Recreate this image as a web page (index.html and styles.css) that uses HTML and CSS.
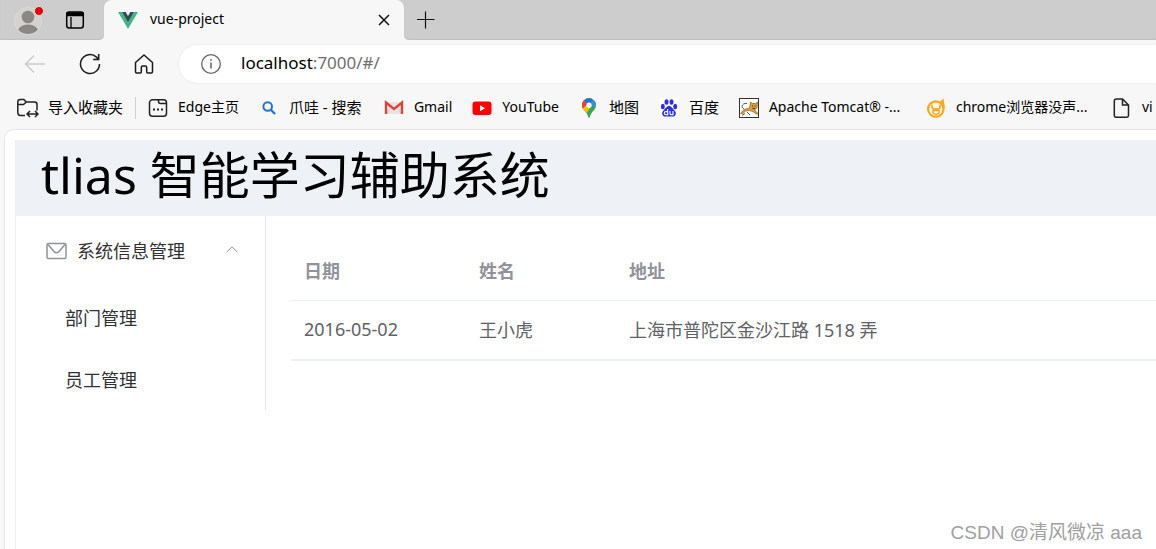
FILE: index.html
```html
<!DOCTYPE html>
<html lang="zh-CN">
<head>
<meta charset="utf-8">
<title>vue-project</title>
<link rel="stylesheet" href="styles.css">
</head>
<body>
<div class="tabstrip">
  <div class="strip-left">
    <button class="icon-btn" aria-label="个人资料">
      <svg width="30" height="30" viewBox="0 0 30 30"><defs><clipPath id="face"><circle cx="14" cy="16" r="13"/></clipPath></defs><circle cx="14" cy="16" r="13.5" fill="#d4d2cf" stroke="#dddbd8"/><g clip-path="url(#face)" fill="#8a8784"><circle cx="14" cy="12" r="6.3"/><ellipse cx="14" cy="27" rx="10.500" ry="7.500"/></g><circle cx="25" cy="6" r="4.500" fill="#e60000" stroke="#ddd"/></svg>
    </button>
    <button class="icon-btn" aria-label="标签页操作">
      <svg width="20" height="20" viewBox="0 0 20 20" fill="none" stroke="#000" stroke-width="1.500"><rect x="1.700" y="2" width="16.600" height="16" rx="2.500"/><path d="M2 3h16v2.500H2z" fill="#000"/><path d="M6 7v11" stroke-width="1.300"/></svg>
    </button>
  </div>
  <div class="tab-slot">
    <div class="tab">
      <svg width="20" height="20" viewBox="0 0 20 20"><path d="M0 2h4l6 10.400L16 2h4L10 19z" fill="#41b883"/><path d="M4 2h3.700L10 6l2.300-4H16l-6 10.400z" fill="#35495e"/></svg>
      <span class="tab-title">vue-project</span>
      <button class="icon-btn" aria-label="关闭标签页"><svg width="12" height="12" viewBox="0 0 12 12"><path d="M1 1l10 10M11 1L1 11" stroke="#111" stroke-width="1.500"/></svg></button>
    </div>
  </div>
  <div class="strip-right">
    <button class="icon-btn" aria-label="新建标签页"><svg width="18" height="18" viewBox="0 0 18 18"><path d="M8.500 .5v17M0 8.500h17.500" stroke="#111" stroke-width="1.200"/></svg></button>
  </div>
</div>
<div class="toolbar">
  <button class="icon-btn" aria-label="后退"><svg width="22" height="20" viewBox="0 0 22 20" fill="none" stroke="#cbcbcb" stroke-width="1.400"><path d="M21 10H1.500M10 1.500L1.500 10l8.500 8.500"/></svg></button>
  <button class="icon-btn" aria-label="刷新"><svg width="22" height="22" viewBox="0 0 22 22" fill="none" stroke="#1b1b1b" stroke-width="1.500"><path d="M20.500 11a9.500 9.500 0 1 1-3-6.900l2 2M19.700 1v5.500h-5.500"/></svg></button>
  <button class="icon-btn" aria-label="主页"><svg width="20" height="22" viewBox="0 0 20 22" fill="none" stroke="#1b1b1b" stroke-width="1.500" stroke-linejoin="round"><path d="M1.500 9.500L10 2l8.500 7.500v9.300q0 1.200-1.200 1.200h-3.600q-1 0-1-1v-4.500q0-1.500-1.500-1.500H8.800q-1.500 0-1.500 1.500V19q0 1-1 1H2.700q-1.200 0-1.200-1.200z"/></svg></button>
  <div class="address">
    <svg width="20" height="20" viewBox="0 0 20 20" fill="none" stroke="#666" stroke-width="1.300"><circle cx="10" cy="10" r="9.300"/><path d="M10 8.500v6M10 5v1.700" stroke-width="1.500"/></svg>
    <span class="url">localhost<span class="url-rest">:7000/#/</span></span>
  </div>
</div>
<nav class="bookmarks">
  <a class="bookmark import" href="#"><svg width="22" height="20" viewBox="0 0 22 20" fill="none" stroke="#222" stroke-width="1.500"><path d="M8 17.500H3.500Q.8 17.500.8 14.700V4Q.8 1.500 3.300 1.500h3.500L9.300 4h8.200Q20 4 20 6.500v6M1 6.500h5.500L9.300 4M10 16h11M13 13l-3 3 3 3M18 13l3 3-3 3"/></svg><span>导入收藏夹</span></a>
  <a class="bookmark latin" href="#"><svg width="20" height="20" viewBox="0 0 20 20" fill="none" stroke="#222" stroke-width="1.500"><rect x="1.500" y="1.800" width="17" height="16.500" rx="3"/><path d="M10.500 2v1.500Q10.500 5.500 12.500 5.500h6"/><path d="M5 11.500h2M9 11.500h2M13 11.500h2" stroke-width="2"/></svg><span>Edge主页</span></a>
  <a class="bookmark search" href="#"><svg width="20" height="20" viewBox="0 0 20 20" fill="none" stroke="#1976d2" stroke-width="2"><circle cx="8.700" cy="8.500" r="4.300"/><path d="M12 12l4 4" stroke-width="2.300"/></svg><span>爪哇 - 搜索</span></a>
  <a class="bookmark latin" href="#"><svg width="20" height="20" viewBox="0 0 20 20"><path d="M2 4h16v12H2z" fill="#e5e5e5"/><path d="M2 16l5.500-6M18 16l-5.500-6" stroke="#ccc"/><path d="M2 16V4.500l8 6.500 8-6.500V16" fill="none" stroke="#dc4437" stroke-width="2.400"/></svg><span>Gmail</span></a>
  <a class="bookmark latin" href="#"><svg width="20" height="20" viewBox="0 0 20 20"><rect x=".5" y="3.500" width="19" height="13.500" rx="3" fill="#f00"/><path d="M8 7.200l5 3-5 3z" fill="#fff"/></svg><span>YouTube</span></a>
  <a class="bookmark" href="#"><svg width="20" height="20" viewBox="0 0 20 20"><defs><clipPath id="pin"><path d="M10 20c-.8 0-.9-2.500-2.300-4.600C6 12.700 3 11 3 7.200a7 7 0 0 1 14 0c0 3.800-3 5.500-4.700 8.200C10.900 17.500 10.800 20 10 20z"/></clipPath></defs><g clip-path="url(#pin)"><path d="M0 0h20v20H0z" fill="#34a853"/><path d="M0 15L14 0H0z" fill="#ea4335"/><path d="M4 3l6 4 5-7H6z" fill="#1a73e8"/><path d="M10 7l6-6 3 5-6 3z" fill="#4285f4"/><path d="M1 10l5-5 5 5-5 7z" fill="#fbbc04"/><path d="M2 4l3-2 4 4-6 5z" fill="#ea4335"/></g><circle cx="10" cy="7.200" r="2.600" fill="#fff"/></svg><span>地图</span></a>
  <a class="bookmark" href="#"><svg width="20" height="20" viewBox="0 0 20 20"><rect width="20" height="20" rx="2" fill="#fff"/><g fill="#2a32df"><ellipse cx="3.800" cy="8.500" rx="2" ry="2.700"/><ellipse cx="7.500" cy="4" rx="2" ry="2.800"/><ellipse cx="12.500" cy="4" rx="2" ry="2.800"/><ellipse cx="16.200" cy="8.500" rx="2" ry="2.700"/><path d="M10 8c2.500 0 3.300 2.500 5.300 4.200 3 2.500 1.200 6.300-1.500 6.300H6.200c-2.700 0-4.500-3.800-1.500-6.300C6.700 10.500 7.500 8 10 8z"/></g><path d="M8.700 11v5.800H7q-1.700 0-1.700-1.600T7 13.600h1.700M11 13v2.500q0 1.300 1.500 1.300h1.500V13" fill="none" stroke="#fff" stroke-width="1.100"/></svg><span>百度</span></a>
  <a class="bookmark latin tomcat" href="#"><svg width="20" height="20" viewBox="0 0 20 20"><rect x=".5" y=".5" width="19" height="19" fill="#fff" stroke="#333"/><path d="M1.500 15.500l3.500-4 5.500-1.500 1-6 2 1.500h3L18.500 4l-.5 6-2.500 2 3.500 3.500-1 .8-4.500-2.800-3-1-4 .5-3 3z" fill="#d9a13c" stroke="#77501c" stroke-width=".6"/><path d="M5 11C1 9 4 4.500 8 5.500M3 17.500l3-2M8 14l3 3" stroke="#555" fill="none"/><path d="M13 8h1M15.500 8h1M13.500 10.500h2.500" stroke="#432" stroke-width="1"/></svg><span>Apache Tomcat® -...</span></a>
  <a class="bookmark latin chrome" href="#"><svg width="20" height="20" viewBox="0 0 20 20"><path d="M14 3.500L17.500.5l.8 5q.5 2 .5 5z" fill="#fba919"/><circle cx="9.800" cy="11" r="7.700" fill="#fff8e8" stroke="#fba919" stroke-width="2.200"/><path d="M6 6.500q-.5 4 2 4.500h4q2.500-.5 2-4.500M7 15v-2.500h6V15q-3 2.500-6 0z" fill="none" stroke="#fba919" stroke-width="1.600"/></svg><span>chrome浏览器没声...</span></a>
  <a class="bookmark latin" href="#"><svg width="20" height="20" viewBox="0 0 20 20" fill="none" stroke="#222" stroke-width="1.500"><path d="M4.500 1h6l6 6v10.500q0 1.700-1.700 1.700H4Q2.300 19.200 2.300 17.500V3Q2.300 1 4.500 1zM10.500 1v6h6"/></svg><span>vi</span></a>
</nav>
<div class="page">
  <div class="container">
    <header class="page-header"><h1>tlias 智能学习辅助系统</h1></header>
    <div class="layout">
      <aside class="aside">
        <button class="menu-title" aria-expanded="true">
          <svg width="22" height="18" viewBox="0 0 22 18" fill="none" stroke="#909399" stroke-width="1.500"><rect x="1" y="1.500" width="19" height="15" rx="1.500"/><path d="M2 2.500l6 7q2.500 2.500 5 0l6-7"/></svg>
          <span>系统信息管理</span>
          <svg class="arrow" width="12" height="8" viewBox="0 0 12 8"><path d="M.7 6L6 .8 11.300 6" fill="none" stroke="#909399"/></svg>
        </button>
        <a class="menu-item" href="#">部门管理</a>
        <a class="menu-item" href="#">员工管理</a>
      </aside>
      <main class="main">
        <table class="table">
          <thead><tr><th class="col-date">日期</th><th class="col-name">姓名</th><th>地址</th></tr></thead>
          <tbody><tr><td>2016-05-02</td><td>王小虎</td><td>上海市普陀区金沙江路 1518 弄</td></tr></tbody>
        </table>
      </main>
    </div>
  </div>
</div>
<div class="watermark">CSDN @清风微凉 aaa</div>
</body>
</html>
```
FILE: styles.css
```css
* { box-sizing: border-box; }
body {
  margin: 0;
  height: 100vh;
  display: flex;
  flex-direction: column;
  overflow: hidden;
  position: relative;
  background: #f7f7f7;
  color: #000;
  font-family: "Noto Sans", "Noto Sans CJK SC", sans-serif;
}
button { border: 0; padding: 0; background: none; font: inherit; color: inherit; }
a { color: inherit; text-decoration: none; }
svg { display: block; flex: none; }
.icon-btn { display: flex; flex: none; }

.tabstrip { display: flex; height: 40px; flex: none; }
.strip-left, .strip-right {
  display: flex;
  align-items: center;
  background: #cdcdcd;
  box-shadow: inset 0 -1px 1px #c0c0c0;
}
.strip-left { width: 104px; gap: 21px; padding-left: 14px; border-bottom-right-radius: 5px; }
.strip-right { flex: 1; padding-left: 13px; border-bottom-left-radius: 5px; }
.tab-slot { width: 300px; background: linear-gradient(#cdcdcd 50%, #f7f7f7 50%); }
.tab {
  display: flex;
  align-items: center;
  height: 100%;
  padding: 0 14px;
  background: #f7f7f7;
  border-radius: 8px 8px 0 0;
}
.tab-title { flex: 1; padding-left: 12px; font-size: 14px; line-height: 18px; padding-bottom: 2px; }

.toolbar { display: flex; align-items: center; height: 47px; flex: none; padding-left: 24px; }
.toolbar .icon-btn { margin-right: 33px; }
.toolbar .address {
  display: flex;
  align-items: center;
  flex: 1;
  gap: 20px;
  height: 38px;
  margin-left: -8px;
  padding-left: 22px;
  background: #fff;
  border-radius: 19px 0 0 19px;
  box-shadow: 0 0 3px #e4e4e4;
}
.url { font-size: 17px; padding-bottom: 2px; }
.url-rest { color: #707070; }

.bookmarks {
  display: flex;
  align-items: center;
  gap: 20px;
  height: 42px;
  flex: none;
  padding: 0 0 1px 17px;
  overflow: hidden;
  font-size: 15px;
  line-height: 20px;
  white-space: nowrap;
}
.bookmark { display: flex; align-items: center; gap: 10px; flex: none; }
.bookmark span { padding-bottom: 2px; }
.latin { font-size: 14px; }
.import { gap: 9px; padding-right: 12px; margin-right: -8px; border-right: 1px solid #d0d0d0; }
.search span { min-width: 75px; }
.tomcat span { min-width: 137px; }
.chrome span { min-width: 136px; }

.page {
  flex: 1;
  margin-left: 4px;
  padding: 10px 0 0 10px;
  background: #fff;
  border: solid #e6e6e6;
  border-width: 1px 0 0 1px;
  border-top-left-radius: 10px;
}
.container { height: 100%; border: solid #eee; border-width: 0 0 0 1px; }
.page-header { height: 76px; padding-left: 25px; background: #eef1f6; }
.page-header h1 { margin: 0; font-size: 50px; line-height: 70px; font-weight: 400; white-space: nowrap; }
.layout { display: flex; align-items: flex-start; }
.aside { width: 250px; flex: none; border-right: 1px solid #e6e6e6; color: #303133; font-size: 18px; }
.menu-title { display: flex; align-items: center; width: 100%; height: 70px; padding: 0 27px 0 30px; }
.menu-title span { flex: 1; padding: 0 0 2px 9px; text-align: left; }
.arrow { margin-bottom: 2px; }
.menu-item { display: flex; align-items: center; height: 62px; padding-left: 49px; }
.main { flex: 1; padding: 25px 0 0 25px; }
.table { width: 100%; table-layout: fixed; border-collapse: separate; border-spacing: 0; font-size: 18px; text-align: left; }
.table th, .table td { height: 60px; padding: 0 13px 2px; border-bottom: 1px solid #ebeef5; }
.table th { color: #909399; font-weight: 700; }
.table td { color: #606266; border-bottom-width: 2px; }
.col-date { width: 175px; }
.col-name { width: 150px; }

.watermark {
  position: absolute;
  right: 14px;
  bottom: 5px;
  font-family: "Liberation Sans", "Noto Sans CJK SC", sans-serif;
  font-size: 19px;
  color: #a0a0a0;
  text-shadow: -1px -1px 0 #fff;
}
```
